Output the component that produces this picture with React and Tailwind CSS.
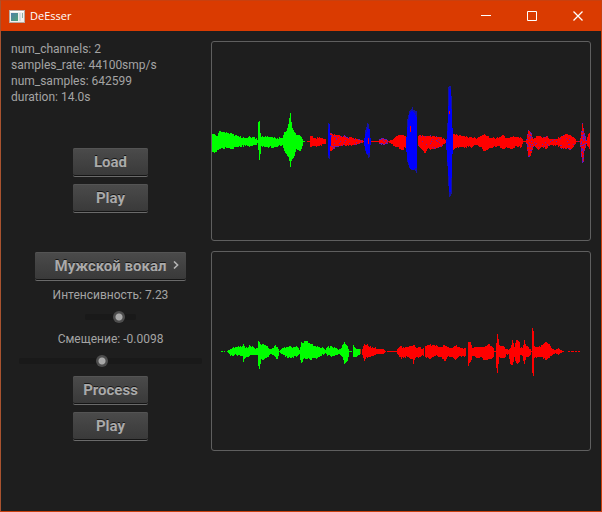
import { useState } from "react";

const WIDTH = 378;
const HEIGHT = 198;
const MIDDLE = 99;

// Each segment is a list of [x, peak above the axis, peak below the axis].
const SOURCE = [
  { color: "#00ff00", points: [[0, 7, 10], [2, 7, 11], [5, 5, 8], [7, 10, 7], [10, 9, 6], [16, 8, 6], [20, 7, 7], [25, 5, 5], [33, 3, 4], [38, 4, 4], [44, 3, 3], [45, 1, 1], [46, 19, 8], [47, 20, 18], [48, 8, 12], [49, 4, 4], [53, 5, 5], [63, 3, 5], [70, 3, 3], [72, 9, 9], [74, 10, 12], [76, 17, 15], [78, 28, 25], [79, 19, 19], [80, 13, 17], [82, 9, 14], [84, 6, 7], [87, 6, 9], [89, 4, 7], [91, 0, 0], [92, 0, 0]] },
  { color: "#ff0000", points: [[95, 0, 0], [97, 0, 0], [98, 5, 5], [100, 5, 4], [103, 3, 4], [108, 3, 3], [113, 2, 2]] },
  { color: "#ff0000", mix: 8, points: [[118, 8, 9], [120, 7, 8], [123, 6, 5], [133, 5, 4], [143, 3, 3], [149, 1, 1], [152, 0, 0]] },
  { color: "#ff0000", points: [[158, 0, 0], [166, 0, 0]] },
  { color: "#ff0000", mix: 3, points: [[167, 2, 2], [171, 3, 3], [175, 1, 2]] },
  { color: "#ff0000", points: [[176, 0, 0], [180, 1, 2], [184, 5, 5], [190, 6, 8], [194, 3, 4]] },
  { color: "#ff0000", mix: 20, points: [[206, 5, 4], [210, 6, 8], [212, 5, 11], [215, 5, 7], [223, 4, 7], [228, 4, 5], [232, 2, 2], [235, 0, 0]] },
  { color: "#ff0000", points: [[240, 7, 9], [243, 6, 6], [248, 6, 5], [258, 4, 5], [265, 3, 3], [268, 5, 5], [272, 7, 9], [278, 3, 6], [286, 3, 4], [290, 6, 7], [294, 3, 5], [299, 4, 7], [303, 4, 4], [309, 3, 5], [311, 0, 0], [313, 0, 0]] },
  { color: "#ff0000", mix: 4, points: [[314, 2, 2], [316, 11, 15], [318, 9, 14], [321, 2, 5]] },
  { color: "#ff0000", mix: 20, points: [[322, 3, 4], [324, 5, 6], [326, 5, 8], [330, 3, 5], [334, 5, 7], [338, 2, 3], [344, 2, 3], [348, 4, 6], [354, 7, 7], [358, 6, 8], [362, 3, 3], [364, 0, 0], [367, 0, 0]] },
  { color: "#ff0000", mix: 2, points: [[368, 3, 5], [369, 10, 15], [370, 18, 21], [371, 13, 20], [372, 8, 9], [374, 1, 2]] },
  { color: "#ff0000", points: [[375, 4, 4], [377, 8, 7]] },
  { color: "#1414a8", points: [[116, 18, 16], [117, 16, 17]] },
  { color: "#0000ff", points: [[116, 12, 13], [117, 17, 14], [118, 6, 4]] },
  { color: "#1414a8", points: [[153, 11, 9], [155, 18, 13], [156, 17, 16], [157, 10, 15]] },
  { color: "#0000ff", points: [[152, 3, 4], [153, 7, 8], [155, 13, 12], [157, 12, 11], [158, 3, 3]] },
  { color: "#1414a8", points: [[195, 22, 20], [197, 30, 26], [200, 34, 28], [201, 31, 28], [203, 30, 29], [204, 30, 31]] },
  { color: "#0000ff", points: [[194, 4, 10], [195, 14, 18], [197, 27, 25], [199, 30, 27], [202, 28, 27], [204, 24, 26]] },
  { color: "#1414a8", points: [[235, 18, 24], [236, 54, 44], [237, 55, 55], [238, 55, 54], [239, 45, 52]] },
  { color: "#0000ff", points: [[234, 2, 8], [235, 10, 20], [236, 35, 34], [237, 52, 50], [238, 52, 50], [239, 32, 36], [240, 13, 12]] },
  { color: "#ff0000", points: [[156, 3, 2]] },
  { color: "#ff0000", points: [[198, 15, -10]] },
  { color: "#ff0000", points: [[237, 30, -28]] },
];

const RESULT = [
  { color: "#00ff00", points: [[9, 0, 0], [10, 0, 0]] },
  { color: "#00ff00", points: [[12, 0, 0]] },
  { color: "#00ff00", points: [[15, 0, 0], [17, 1, 2], [20, 3, 4], [24, 4, 3], [30, 5, 4], [31, 7, 10], [33, 3, 6], [38, 5, 3], [42, 3, 3], [45, 3, 3], [46, 10, 14], [47, 9, 17], [49, 6, 7], [51, 7, 8], [54, 5, 6], [58, 2, 2], [61, 3, 3], [63, 6, 5], [65, 4, 7], [67, 0, 0], [68, 1, 1], [72, 4, 3], [76, 4, 6], [85, 4, 4], [87, 1, 2], [88, 4, 8], [89, 9, 11], [91, 8, 7], [93, 10, 7], [97, 8, 7], [103, 5, 6], [108, 3, 4], [111, 3, 3], [113, 1, 1], [115, 4, 4], [122, 4, 4], [126, 1, 2], [128, 2, 3], [130, 6, 5], [132, 9, 12], [135, 5, 9], [137, 0, 0], [139, 0, 0]] },
  { color: "#00ff00", points: [[141, 6, 5], [143, 3, 5], [147, 2, 3]] },
  { color: "#a04a00", points: [[148, 2, 2]] },
  { color: "#ff0000", points: [[150, 2, 3], [152, 7, 9], [154, 6, 5], [160, 4, 4], [166, 2, 2], [171, 2, 2], [173, 0, 0]] },
  { color: "#ff0000", points: [[175, 0, 0], [184, 0, 0], [186, 3, 3], [189, 5, 7], [192, 3, 5], [196, 4, 5], [200, 5, 7], [201, 6, 12], [203, 4, 6], [211, 3, 4]] },
  { color: "#ff0000", points: [[213, 5, 5], [217, 6, 7], [223, 5, 4], [229, 4, 5], [232, 6, 9], [235, 4, 5], [240, 3, 5], [243, 5, 8], [246, 4, 5], [253, 3, 4]] },
  { color: "#ff0000", points: [[256, 9, 14], [258, 9, 10], [260, 3, 4], [264, 4, 6], [268, 4, 5], [273, 5, 8], [277, 7, 7], [281, 3, 5], [282, 0, 0], [283, 0, 0], [284, 8, 16], [285, 17, 21], [286, 12, 12], [287, 6, 5], [290, 5, 6], [296, 1, 2], [298, 3, 12], [300, 11, 13], [302, 4, 5], [304, 11, 11], [307, 9, 10], [308, 3, 3], [310, 3, 4], [312, 11, 12], [314, 5, 5], [318, 2, 3], [319, 0, 0], [320, 23, 21], [321, 20, 24], [322, 5, 6], [328, 4, 5], [333, 9, 8], [337, 7, 6], [340, 2, 3], [343, 1, 1], [346, 3, 3], [348, 1, 1], [351, 0, 0]] },
  { color: "#ff0000", points: [[356, 0, 0], [357, 0, 0]] },
  { color: "#ff0000", points: [[359, 0, 0], [361, 0, 0]] },
  { color: "#ff0000", points: [[363, 0, 0], [364, 0, 0]] },
  { color: "#ff0000", points: [[366, 0, 0], [367, 0, 0]] },
];

const hash = (a, b) => {
  const v = Math.sin(a * 12.9898 + b * 78.233) * 43758.5453;
  return v - Math.floor(v);
};

const jitter = (value, x, seed) => {
  if (value < 2.5) return Math.round(value);
  return Math.round(value + (hash(x, seed) - 0.5) * 2);
};

// One pixel-wide column for every sample between the segment's points.
function columns(points) {
  const out = [];
  points.forEach(([x0, up0, down0], i) => {
    const next = points[i + 1];
    if (!next) {
      out.push([x0, up0, down0]);
      return;
    }
    for (let x = x0; x < next[0]; x += 1) {
      const t = (x - x0) / (next[0] - x0);
      const up = up0 + (next[1] - up0) * t;
      const down = down0 + (next[2] - down0) * t;
      out.push(x === x0 ? [x, up0, down0] : [x, jitter(up, x, 1), jitter(down, x, 2)]);
    }
  });
  return out;
}

const toPath = (cols) =>
  cols.map(([x, up, down]) => `M${x} ${MIDDLE - up}h1v${up + down + 1}h-1z`).join("");

// Scattered blue samples; a smaller mix value gives a denser scatter.
const speckles = (cols, mix) =>
  cols
    .flatMap(([x, up, down]) => {
      const dots = [];
      for (let y = -up; y <= down; y += 1) {
        const edge = y < 1 - up || y > down - 1;
        if (hash(x, y + 50) < (edge ? 3 : 0.8) / mix) dots.push(`M${x} ${MIDDLE + y}h1v1h-1z`);
      }
      return dots;
    })
    .join("");

function Waveform({ label, segments }) {
  return (
    <div className="overflow-hidden rounded-[3px] border border-[#5f5f5f]">
      <svg
        role="img"
        aria-label={label}
        viewBox={`0 0 ${WIDTH} ${HEIGHT}`}
        preserveAspectRatio="none"
        shapeRendering="crispEdges"
        className="block h-[198px] w-full"
      >
        {segments.map(({ color, points, mix }, i) => {
          const cols = columns(points);
          return (
            <g key={i}>
              <path d={toPath(cols)} fill={color} />
              {mix && <path d={speckles(cols, mix)} fill="#6a18b4" />}
            </g>
          );
        })}
      </svg>
    </div>
  );
}

const face =
  "h-[29px] rounded-[2px] border-b border-[#6a6a6a] bg-linear-to-b from-[#4b4b4b] to-[#393939] text-[15px] font-bold text-[#aaaaaa] shadow-[inset_0_1px_0_#545454,inset_0_-1px_0_#151515] [text-shadow:0_-1px_0_#161616]";

function Button({ children }) {
  return (
    <button type="button" className={`${face} flex w-[75px] items-center justify-center`}>
      {children}
    </button>
  );
}

function Slider({ id, label, digits, width, ...range }) {
  const [value, setValue] = useState(range.initial);
  return (
    <div className="flex w-full flex-col items-center">
      <label htmlFor={id} className="leading-4">
        {label}: {value.toFixed(digits)}
      </label>
      <div className="flex h-7 w-full items-center justify-center">
        <input
          id={id}
          type="range"
          min={range.min}
          max={range.max}
          step={range.step}
          value={value}
          onChange={(e) => setValue(Number(e.target.value))}
          className={`${width} h-[6px] appearance-none rounded-[2px] bg-[#191919] [&::-webkit-slider-thumb]:size-3 [&::-webkit-slider-thumb]:appearance-none [&::-webkit-slider-thumb]:rounded-full [&::-webkit-slider-thumb]:bg-[radial-gradient(circle,#a8a8a8_0_3px,#4d4d4d_4px)]`}
        />
      </div>
    </div>
  );
}

function AppIcon() {
  return (
    <svg viewBox="0 0 16 13" className="h-[13px] w-4" aria-hidden="true">
      <defs>
        <linearGradient id="pane" x1="0" y1="0" x2="1" y2="1">
          <stop offset="0" stopColor="#4d7fa8" />
          <stop offset="1" stopColor="#4fa276" />
        </linearGradient>
      </defs>
      <rect x="0.5" y="0.5" width="15" height="12" fill="#f1efec" stroke="#b9aaa2" />
      <rect x="1" y="1" width="14" height="1" fill="#ffffff" />
      <rect x="2" y="3" width="7" height="8" fill="url(#pane)" />
      <rect x="10" y="3" width="2" height="8" fill="#d3dde2" />
      <rect x="13" y="3" width="1" height="5" fill="#8fb0a6" />
    </svg>
  );
}

function CaptionButton({ label, children }) {
  return (
    <button type="button" aria-label={label} className="flex h-[30px] w-[46px] items-center justify-center text-white">
      <svg viewBox="0 0 10 10" className="size-[10px]" fill="none" stroke="currentColor">
        {children}
      </svg>
    </button>
  );
}

export default function App() {
  return (
    <div className="flex min-h-screen flex-col border border-[#c9400f] border-l-[#a9532f] bg-[#1e1e1e] font-[Roboto,'Liberation_Sans',sans-serif] text-[12px] text-[#a4a4a4]">
      <header className="flex h-[30px] items-center bg-[#da3b01] pl-2">
        <AppIcon />
        <h1 className="grow pl-[5px] font-['Open_Sans','Noto_Sans',sans-serif] text-[11px] text-white">DeEsser</h1>
        <CaptionButton label="Minimize">
          <path d="M0 4.5h10" />
        </CaptionButton>
        <CaptionButton label="Maximize">
          <path d="M0.5 0.5h9v9h-9z" />
        </CaptionButton>
        <CaptionButton label="Close">
          <path d="M0.5 0.5l9 9M9.5 0.5l-9 9" strokeWidth="1.3" />
        </CaptionButton>
      </header>

      <main className="flex grow gap-px p-[10px]">
        <section className="flex w-[199px] shrink-0 flex-col items-center">
          <div className="w-full leading-4">
            <p>num_channels: 2</p>
            <p>samples_rate: 44100smp/s</p>
            <p>num_samples: 642599</p>
            <p>duration: 14.0s</p>
          </div>

          <div className="mt-[43px] flex flex-col gap-[7px]">
            <Button>Load</Button>
            <Button>Play</Button>
          </div>

          <div className="relative mt-[39px] mb-[6px]">
            <select aria-label="Вокал" className={`${face} w-[151px] appearance-none px-3 [text-align-last:center]`}>
              <option>Мужской вокал</option>
              <option>Женский вокал</option>
            </select>
            <svg
              viewBox="0 0 6 8"
              className="pointer-events-none absolute top-[9px] right-[7px] h-2 w-[6px]"
              fill="none"
              stroke="#b4b4b4"
              strokeWidth="1.6"
              aria-hidden="true"
            >
              <path d="M1 0.5L4.6 4L1 7.5" />
            </svg>
          </div>

          <Slider id="intensity" label="Интенсивность" digits={2} width="w-[51px]" min={0} max={10} step={0.01} initial={7.23} />
          <Slider id="offset" label="Смещение" digits={4} width="w-[183px]" min={-0.1} max={0.1} step={0.0001} initial={-0.0098} />

          <div className="mt-px flex flex-col gap-[7px]">
            <Button>Process</Button>
            <Button>Play</Button>
          </div>
        </section>

        <section className="flex min-w-0 grow flex-col gap-[10px]">
          <Waveform label="Source waveform" segments={SOURCE} />
          <Waveform label="Processed waveform" segments={RESULT} />
        </section>
      </main>
    </div>
  );
}
